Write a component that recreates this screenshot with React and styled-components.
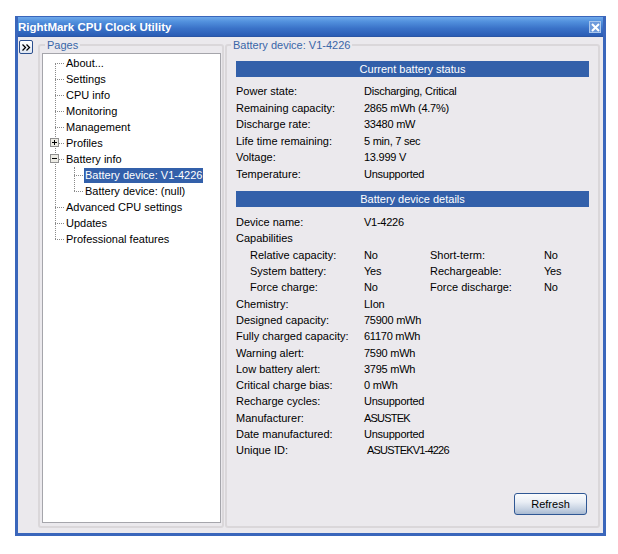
import React from 'react';
import styled, { createGlobalStyle } from 'styled-components';

const GlobalStyle = createGlobalStyle`
  html, body {
    margin: 0;
    padding: 0;
    background: #fff;
  }
  body {
    font-family: "Liberation Sans", Arial, sans-serif;
    font-size: 11px;
    color: #000;
  }
`;

const treeTop = ['About...', 'Settings', 'CPU info', 'Monitoring', 'Management'];
const treeBottom = ['Advanced CPU settings', 'Updates', 'Professional features'];

const statusRows = [
  ['Power state:', 'Discharging, Critical'],
  ['Remaining capacity:', '2865 mWh (4.7%)'],
  ['Discharge rate:', '33480 mW'],
  ['Life time remaining:', '5 min, 7 sec'],
  ['Voltage:', '13.999 V'],
  ['Temperature:', 'Unsupported'],
];

const capabilityRows = [
  ['Relative capacity:', 'No', 'Short-term:', 'No'],
  ['System battery:', 'Yes', 'Rechargeable:', 'Yes'],
  ['Force charge:', 'No', 'Force discharge:', 'No'],
];

const detailRows = [
  ['Chemistry:', 'LIon'],
  ['Designed capacity:', '75900 mWh'],
  ['Fully charged capacity:', '61170 mWh'],
  ['Warning alert:', '7590 mWh'],
  ['Low battery alert:', '3795 mWh'],
  ['Critical charge bias:', '0 mWh'],
  ['Recharge cycles:', 'Unsupported'],
];

const App = () => (
  <>
    <GlobalStyle />
    <Window>
      <TitleBar>
        <TitleText>RightMark CPU Clock Utility</TitleText>
        <CloseButton aria-label="Close">
          <svg width="9" height="9" viewBox="0 0 9 9">
            <path d="M1 1 L8 8 M8 1 L1 8" stroke="#fff" strokeWidth="2" fill="none" />
          </svg>
        </CloseButton>
      </TitleBar>
      <Body>
        <Rail>
          <ToggleButton aria-label="Toggle pages">
            <svg width="9" height="7" viewBox="0 0 9 7">
              <path d="M0.5 0.5 L3.5 3.5 L0.5 6.5 M4.5 0.5 L7.5 3.5 L4.5 6.5" stroke="#000" strokeWidth="1.3" fill="none" />
            </svg>
          </ToggleButton>
        </Rail>
        <PagesGroup>
          <Legend>Pages</Legend>
          <TreeBox>
            <TreeList>
              {treeTop.map((name) => (
                <TreeRow key={name}><TreeLabel>{name}</TreeLabel></TreeRow>
              ))}
              <TreeRow>
                <Expander>
                  <svg width="7" height="7" viewBox="0 0 7 7">
                    <path d="M1 3.5 H6 M3.5 1 V6" stroke="#000" fill="none" />
                  </svg>
                </Expander>
                <TreeLabel>Profiles</TreeLabel>
              </TreeRow>
              <TreeRow>
                <Expander>
                  <svg width="7" height="7" viewBox="0 0 7 7">
                    <path d="M1 3.5 H6" stroke="#000" fill="none" />
                  </svg>
                </Expander>
                <TreeLabel>Battery info</TreeLabel>
              </TreeRow>
              <SubList>
                <TreeRow>
                  <TreeLabel $selected>Battery device: V1-4226</TreeLabel>
                </TreeRow>
                <TreeRow>
                  <TreeLabel>Battery device: (null)</TreeLabel>
                </TreeRow>
              </SubList>
              {treeBottom.map((name) => (
                <TreeRow key={name}><TreeLabel>{name}</TreeLabel></TreeRow>
              ))}
            </TreeList>
          </TreeBox>
        </PagesGroup>
        <DeviceGroup>
          <DeviceLegend>Battery device: V1-4226</DeviceLegend>
          <SectionBar>Current battery status</SectionBar>
          <Rows>
            {statusRows.map(([label, value]) => (
              <InfoRow key={label} $pitch={16.5}>
                <Label>{label}</Label>
                <Value>{value}</Value>
              </InfoRow>
            ))}
          </Rows>
          <SectionBar $second>Battery device details</SectionBar>
          <Rows $details>
            <InfoRow>
              <Label>Device name:</Label>
              <Value>V1-4226</Value>
            </InfoRow>
            <InfoRow>
              <Label>Capabilities</Label>
            </InfoRow>
            {capabilityRows.map(([a, b, c, d]) => (
              <CapabilityRow key={a}>
                <span>{a}</span>
                <Value>{b}</Value>
                <span>{c}</span>
                <Value>{d}</Value>
              </CapabilityRow>
            ))}
            {detailRows.map(([label, value]) => (
              <InfoRow key={label}>
                <Label>{label}</Label>
                <Value>{value}</Value>
              </InfoRow>
            ))}
            <InfoRow>
              <Label>Manufacturer:</Label>
              <CapsValue>ASUSTEK</CapsValue>
            </InfoRow>
            <InfoRow>
              <Label>Date manufactured:</Label>
              <Value>Unsupported</Value>
            </InfoRow>
            <InfoRow>
              <Label>Unique ID:</Label>
              <UniqueValue>ASUSTEKV1-4226</UniqueValue>
            </InfoRow>
          </Rows>
          <Footer>
            <RefreshButton>Refresh</RefreshButton>
          </Footer>
        </DeviceGroup>
      </Body>
    </Window>
  </>
);

export default App;

const Window = styled.div`
  box-sizing: border-box;
  width: 591px;
  height: 520px;
  margin: 16px 0 0 15px;
  display: flex;
  flex-direction: column;
  background: #ebe9ed;
  border-style: solid;
  border-width: 1px 3px 3px 3px;
  border-color: #3a66bb;
`;

const TitleBar = styled.div`
  height: 20px;
  flex: none;
  display: flex;
  align-items: center;
  justify-content: space-between;
  padding: 1px 2px 0 0;
  box-sizing: border-box;
  background: linear-gradient(#6fa9ea 0, #5190dd 25%, #3a72c8 60%, #2a5cb4 100%);
  border-bottom: 1px solid #2a55a5;
`;

const TitleText = styled.span`
  color: #fff;
  font-weight: 700;
  font-size: 11.5px;
`;

const CloseButton = styled.div`
  box-sizing: border-box;
  width: 12px;
  height: 12px;
  display: flex;
  align-items: center;
  justify-content: center;
  background: #6d9adb;
  border: 1px solid #a9c6ec;
`;

const Body = styled.div`
  flex: 1;
  min-height: 0;
  display: flex;
  padding: 2px 3px 5px 0;
`;

const Rail = styled.div`
  width: 20px;
  flex: none;
  padding: 1px 0 0 1px;
  box-sizing: border-box;
`;

const ToggleButton = styled.div`
  box-sizing: border-box;
  width: 14px;
  height: 14px;
  display: flex;
  align-items: center;
  justify-content: center;
  background: linear-gradient(#fff, #dfe6f2);
  border: 1px solid #2c4f8e;
  border-radius: 2px;
`;

const GroupBox = styled.fieldset`
  box-sizing: border-box;
  margin: 0;
  min-width: 0;
  display: flex;
  flex-direction: column;
  border: 2px solid #dad7da;
  border-radius: 3px;
`;

const PagesGroup = styled(GroupBox)`
  width: 186px;
  flex: none;
  padding: 2px 1px 3px 2px;
`;

const DeviceGroup = styled(GroupBox)`
  flex: 1;
  margin-left: 1px;
  padding: 10px 9px 11px 9px;
`;

const Legend = styled.legend`
  padding: 0 2px;
  margin-left: 3px;
  color: #3a66a8;
  line-height: 12px;
`;

const DeviceLegend = styled(Legend)`
  margin-left: -5px;
`;

const TreeBox = styled.div`
  flex: 1;
  min-height: 0;
  background: #fff;
  border: 1px solid #a5a5ab;
  padding: 1px 0 0 0;
`;

const TreeList = styled.div`
  position: relative;
  padding-left: 22px;

  &::before {
    content: '';
    position: absolute;
    left: 12px;
    top: 8px;
    height: 176px;
    border-left: 1px dotted #8a8a8a;
  }
`;

const SubList = styled.div`
  position: relative;
  padding-left: 19px;

  &::before {
    content: '';
    position: absolute;
    left: 9px;
    top: 0;
    height: 24px;
    border-left: 1px dotted #8a8a8a;
  }
`;

const TreeRow = styled.div`
  position: relative;
  height: 16px;
  display: flex;
  align-items: center;

  &::before {
    content: '';
    position: absolute;
    left: -10px;
    width: 9px;
    top: 8px;
    border-top: 1px dotted #8a8a8a;
  }
`;

const TreeLabel = styled.span`
  padding: 0 1px;
  line-height: 15px;
  white-space: nowrap;
  background: ${(p) => (p.$selected ? '#3360aa' : 'transparent')};
  color: ${(p) => (p.$selected ? '#fff' : '#000')};
`;

const Expander = styled.span`
  position: absolute;
  z-index: 1;
  left: -15px;
  top: 3px;
  box-sizing: border-box;
  width: 9px;
  height: 9px;
  display: flex;
  align-items: center;
  justify-content: center;
  background: #ecebe4;
  border: 1px solid #8f8f8f;
`;

const SectionBar = styled.div`
  height: 16px;
  flex: none;
  margin-top: ${(p) => (p.$second ? '9px' : '0')};
  display: flex;
  align-items: center;
  justify-content: center;
  background: #3360aa;
  color: #fff;
`;

const Rows = styled.div`
  margin-top: ${(p) => (p.$details ? '7px' : '6px')};
  display: flex;
  flex-direction: column;
`;

const InfoRow = styled.div`
  height: ${(p) => p.$pitch || 16.3}px;
  display: flex;
  align-items: center;
  white-space: nowrap;
`;

const Label = styled.span`
  width: 128px;
  flex: none;
`;

const Value = styled.span`
  letter-spacing: -0.25px;
`;

const CapsValue = styled.span`
  letter-spacing: -0.8px;
`;

const UniqueValue = styled(CapsValue)`
  padding-left: 3px;
`;

const CapabilityRow = styled.div`
  height: 16.3px;
  display: grid;
  grid-template-columns: 114px 66px 114px auto;
  align-items: center;
  padding-left: 14px;
  white-space: nowrap;
`;

const Footer = styled.div`
  margin-top: auto;
  display: flex;
  justify-content: flex-end;
  padding-right: 2px;
`;

const RefreshButton = styled.div`
  box-sizing: border-box;
  width: 73px;
  height: 22px;
  display: flex;
  align-items: center;
  justify-content: center;
  background: linear-gradient(#fbfcfd 0, #e9eef5 40%, #c6d2e2 75%, #a9bad2 100%);
  border: 1px solid #2f5794;
  border-radius: 3px;
`;
